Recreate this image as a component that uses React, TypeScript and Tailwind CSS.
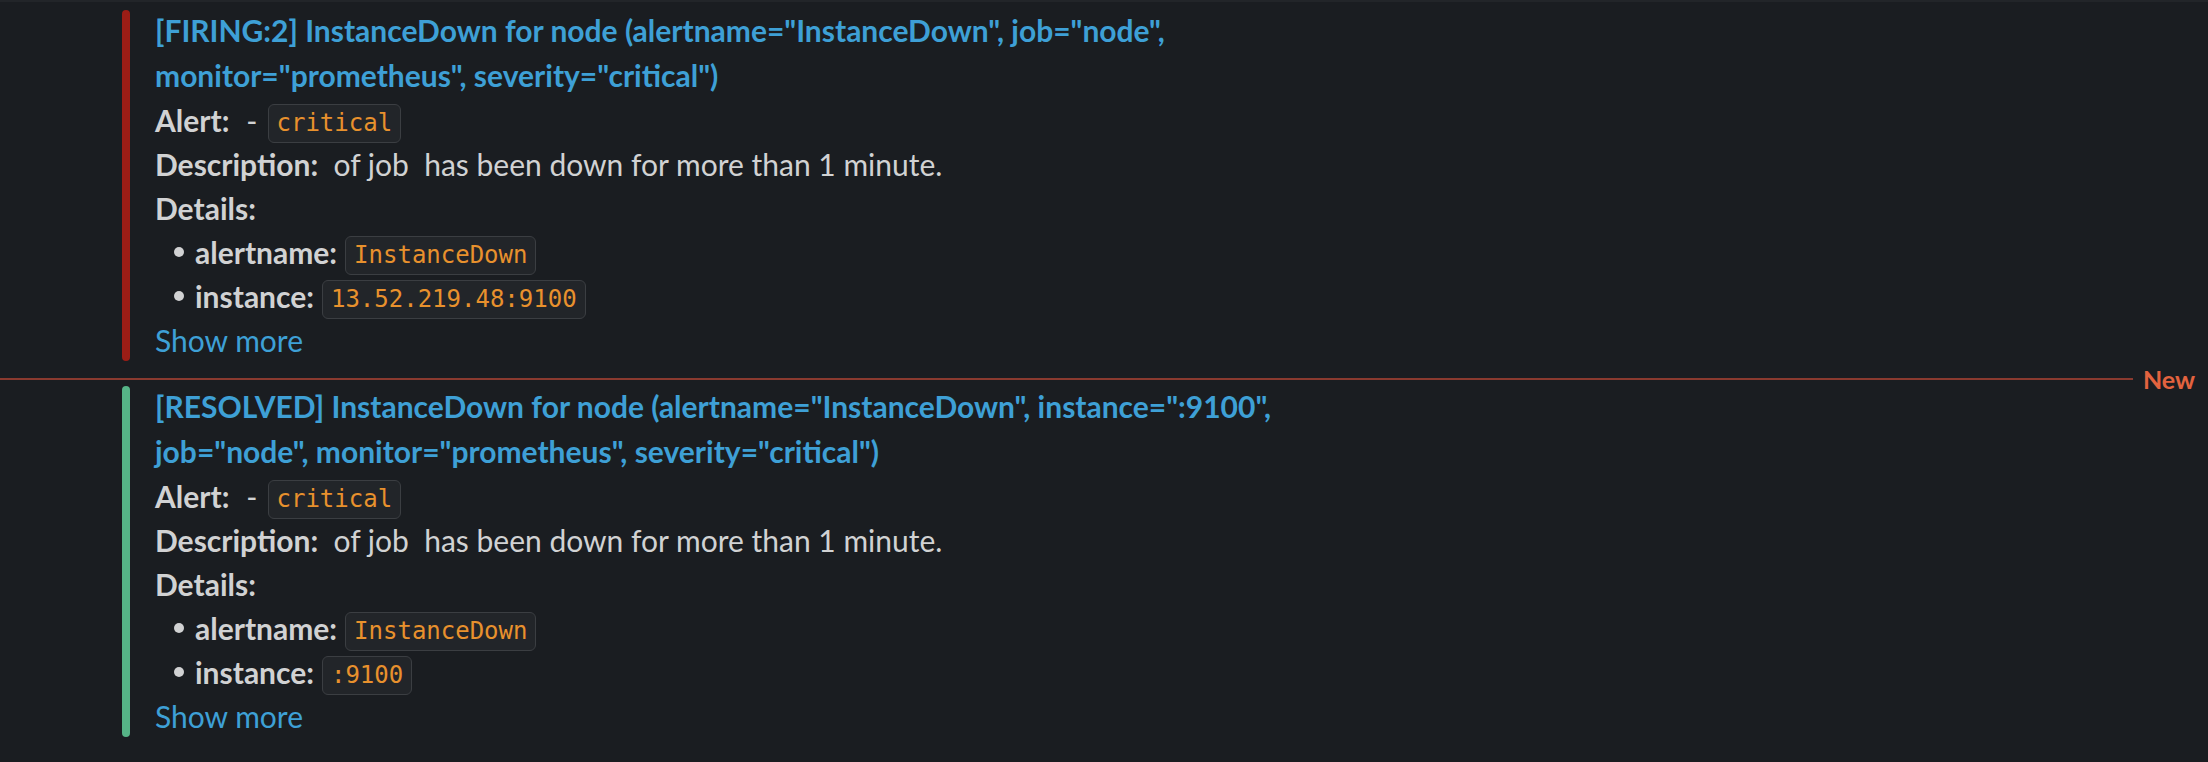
import React from 'react';

type Alert = {
  status: 'firing' | 'resolved';
  title: string;
  instance: string;
};

const alerts: Alert[] = [
  {
    status: 'firing',
    title: '[FIRING:2] InstanceDown for node (alertname="InstanceDown", job="node", monitor="prometheus", severity="critical")',
    instance: '13.52.219.48:9100',
  },
  {
    status: 'resolved',
    title: '[RESOLVED] InstanceDown for node (alertname="InstanceDown", instance=":9100", job="node", monitor="prometheus", severity="critical")',
    instance: ':9100',
  },
];

function Code({ children }: { children: React.ReactNode }) {
  return (
    <span className="inline-flex h-[39px] items-center rounded-[6px] border border-[#3b3e42] bg-[#222529] px-[8px] font-['DejaVu_Sans_Mono',monospace] text-[24px] leading-none text-[#e8912d]">
      {children}
    </span>
  );
}

function Bullet({ label, value }: { label: string; value: string }) {
  return (
    <div className="flex h-[44px] items-center">
      <span className="ml-[19px] mr-[11px] h-[10px] w-[10px] rounded-full bg-[#d1d2d3]" />
      <span className="font-bold">{label}</span>
      <span className="ml-[8px]">
        <Code>{value}</Code>
      </span>
    </div>
  );
}

function AlertMessage({ alert }: { alert: Alert }) {
  const bar = alert.status === 'firing' ? 'bg-[#9c1d16]' : 'bg-[#56b487]';
  return (
    <div className="flex items-start pl-[122px]">
      <div className={`h-[351px] w-[8px] shrink-0 rounded-full ${bar}`} />
      <div className="-mt-[2px] ml-[25px] max-w-[1180px] text-[30px] leading-[44px] text-[#d1d2d3]">
        <div className="font-bold leading-[45px] text-[#3ea0d6]">{alert.title}</div>
        <div className="flex h-[44px] items-center">
          <span className="font-bold">Alert:</span>
          <span className="ml-[17px]">-</span>
          <span className="ml-[10px]">
            <Code>critical</Code>
          </span>
        </div>
        <div className="whitespace-pre">
          <span className="font-bold">Description:</span>
          {'  of job  has been down for more than 1 minute.'}
        </div>
        <div className="font-bold">Details:</div>
        <Bullet label="alertname:" value="InstanceDown" />
        <Bullet label="instance:" value={alert.instance} />
        <div className="text-[#3ea0d6]">Show more</div>
      </div>
    </div>
  );
}

export default function App() {
  return (
    <div className="h-[762px] w-full overflow-hidden border-t-2 border-[#222529] bg-[#1a1d21] pt-[8px] font-['Lato',sans-serif]">
      <AlertMessage alert={alerts[0]} />

      {/* New messages divider */}
      <div className="mb-[6px] mt-[16px] flex h-[2px] items-center">
        <div className="h-[2px] flex-1 bg-[#8a3a2f]" />
        <span className="ml-[10px] mr-[13px] text-[25px] font-bold leading-none text-[#e3633f]">New</span>
      </div>

      <AlertMessage alert={alerts[1]} />
    </div>
  );
}
